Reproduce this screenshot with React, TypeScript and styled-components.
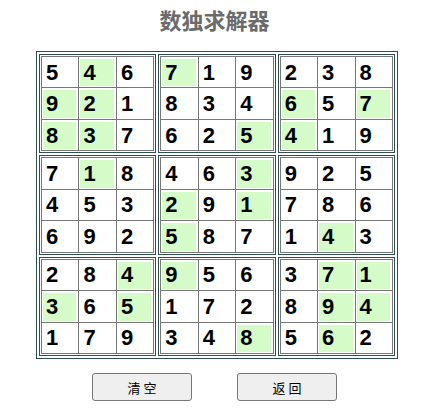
import styled, { createGlobalStyle } from 'styled-components';

const GlobalStyle = createGlobalStyle`
  html, body {
    margin: 0;
    padding: 0;
    background: #ffffff;
  }
  body {
    font-family: 'Liberation Sans', Arial, 'Noto Sans CJK SC', sans-serif;
  }
`;

const Page = styled.div`
  display: flex;
  flex-direction: column;
  align-items: center;
  padding-top: 4px;
`;

const Title = styled.h1`
  margin: 0 0 17px 0;
  font-family: 'Noto Sans CJK SC', sans-serif;
  font-size: 22px;
  line-height: 30px;
  font-weight: bold;
  color: #6b6b6b;
`;

const Board = styled.div`
  box-sizing: border-box;
  width: 362px;
  height: 308px;
  margin-left: 5px;
  display: grid;
  grid-template-columns: repeat(3, 1fr);
  grid-template-rows: repeat(3, 1fr);
  gap: 2px;
  padding: 2px;
  border: 1px solid #2f4f4f;
`;

const Box = styled.div`
  box-sizing: border-box;
  border: 1px solid #2f4f4f;
  padding: 1px;
  display: flex;
`;

const Grid = styled.div`
  flex: 1;
  display: grid;
  grid-template-columns: repeat(3, 1fr);
  grid-template-rows: repeat(3, 1fr);
  gap: 1px;
  padding: 1px;
  background: #777777;
`;

const Cell = styled.div`
  background: #ffffff;
  padding: 2px 2px 1px 1px;
  display: flex;
  min-width: 0;
`;

const Value = styled.span<{ $given: boolean }>`
  flex: 1;
  display: flex;
  align-items: center;
  padding-left: 3px;
  background: ${(p) => (p.$given ? '#d5fcc8' : 'transparent')};
  font-family: 'Liberation Sans', Arial, sans-serif;
  font-size: 22px;
  font-weight: bold;
  color: #000000;
`;

const Buttons = styled.div`
  display: flex;
  gap: 45px;
  margin-top: 14px;
`;

const Button = styled.button`
  width: 100px;
  height: 28px;
  background: #efefef;
  border: 1px solid #767676;
  border-radius: 3px;
  font-family: 'Noto Sans CJK SC', sans-serif;
  font-size: 13px;
  color: #000000;
  padding: 0;
  cursor: pointer;
`;

const rows = [
  '546719238',
  '921834657',
  '837625419',
  '718463925',
  '453291786',
  '692587143',
  '284956371',
  '365172894',
  '179348562',
];

// marks for cells that were filled in by the user (green)
const given = [
  '010100000',
  '110000101',
  '110001100',
  '010001000',
  '000101000',
  '000100010',
  '001100011',
  '101000011',
  '000001010',
];

const App = () => {
  const boxes = [0, 1, 2, 3, 4, 5, 6, 7, 8];
  return (
    <Page>
      <GlobalStyle />
      <Title>数独求解器</Title>
      <Board>
        {boxes.map((b) => {
          const br = Math.floor(b / 3) * 3;
          const bc = (b % 3) * 3;
          const cells = [];
          for (let i = 0; i < 9; i++) {
            const r = br + Math.floor(i / 3);
            const c = bc + (i % 3);
            cells.push(
              <Cell key={i}>
                <Value $given={given[r][c] === '1'}>{rows[r][c]}</Value>
              </Cell>
            );
          }
          return (
            <Box key={b}>
              <Grid>{cells}</Grid>
            </Box>
          );
        })}
      </Board>
      <Buttons>
        <Button>清 空</Button>
        <Button>返 回</Button>
      </Buttons>
    </Page>
  );
};

export default App;
